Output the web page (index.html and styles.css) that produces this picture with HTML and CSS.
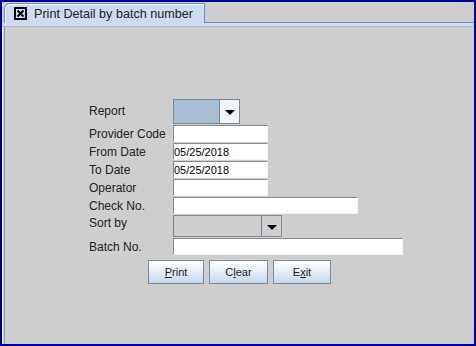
FILE: index.html
```html
<!DOCTYPE html>
<html>
<head>
<meta charset="utf-8">
<link rel="stylesheet" href="styles.css">
</head>
<body>
<div class="window">
  <div class="tabstrip">
    <div class="tab">
      <svg class="close" width="13" height="13" viewBox="0 0 13 13">
        <rect x="1" y="1" width="11" height="11" fill="none" stroke="#000" stroke-width="2"/>
        <path d="M3.5 3.5 L9.5 9.5 M9.5 3.5 L3.5 9.5" stroke="#000" stroke-width="2" fill="none"/>
      </svg>
      <span class="tab-title">Print Detail by batch number</span>
    </div>
    <div class="tab-rest"></div>
  </div>
  <div class="band"></div>
  <div class="panel">
    <div class="form">
      <div class="label label-report">Report</div>
      <div class="combo combo-report"><div class="combo-value sel"></div><div class="combo-btn light"><span class="arrow"></span></div></div>

      <div class="label">Provider Code</div>
      <div class="field w94"></div>

      <div class="label">From Date</div>
      <div class="field w94">05/25/2018</div>

      <div class="label">To Date</div>
      <div class="field w94">05/25/2018</div>

      <div class="label">Operator</div>
      <div class="field w94"></div>

      <div class="label">Check No.</div>
      <div class="field w184"></div>

      <div class="label label-sort">Sort by</div>
      <div class="combo combo-sort"><div class="combo-value"></div><div class="combo-btn"><span class="arrow"></span></div></div>

      <div class="label">Batch No.</div>
      <div class="field w229"></div>
    </div>
    <div class="buttons">
      <div class="btn b-print"><u>P</u>rint</div>
      <div class="btn b-clear">C<u>l</u>ear</div>
      <div class="btn b-exit">E<u>x</u>it</div>
    </div>
  </div>
</div>
</body>
</html>
```

FILE: styles.css
```css
* { box-sizing: border-box; }
html, body { margin: 0; padding: 0; }
body {
  width: 476px;
  height: 346px;
  overflow: hidden;
  font-family: "Liberation Sans", Arial, sans-serif;
}
.window {
  width: 476px;
  height: 346px;
  border: 2px solid #0000a0;
  background: #cecece;
  display: flex;
  flex-direction: column;
}
.tabstrip {
  display: flex;
  height: 21px;
  flex: none;
}
.tab {
  margin-left: 2px;
  margin-top: 1px;
  width: 201px;
  height: 20px;
  background: #cddcf4;
  border: 1px solid #6e8fc8;
  border-bottom: none;
  border-top-left-radius: 6px;
  box-shadow: inset 1px 1px 0 #eef3fc;
  display: flex;
  align-items: center;
  padding-left: 9px;
  gap: 7px;
}
.close { flex: none; display: block; }
.tab-title {
  font-size: 12.6px;
  color: #222;
  white-space: nowrap;
}
.tab-rest {
  flex: 1;
  border-bottom: 1px solid #6e8fc8;
}
.band {
  flex: none;
  height: 4px;
  background: #cddcf4;
  border-bottom: 1px solid #b2b8c2;
}
.panel {
  flex: 1;
  box-shadow: inset 1px 0 0 #eef2f8, inset 2px 0 0 #cddcf4, inset 3px 0 0 #7f9bc7;
  padding-top: 72px;
  padding-left: 87px;
}
.form {
  display: grid;
  grid-template-columns: 84px auto;
  grid-template-rows: 25px repeat(5, 17px) 22px 17px;
  row-gap: 1px;
  align-items: center;
}
.label {
  font-size: 12px;
  color: #222;
  white-space: nowrap;
  line-height: 14px;
}
.label-report { align-self: start; margin-top: 5px; }
.label-sort { align-self: start; margin-top: 1px; }
.field {
  height: 17px;
  background: #fff;
  border-top: 1px solid #8a8a8a;
  border-left: 1px solid #8a8a8a;
  border-right: 1px solid #f4f4f4;
  border-bottom: 1px solid #f4f4f4;
  font-size: 11px;
  line-height: 16px;
  color: #000;
  white-space: nowrap;
}
.w94 { width: 95px; }
.w184 { width: 185px; }
.w229 { width: 230px; }
.combo {
  display: flex;
  border: 1px solid #7a8a99;
}
.combo-report { width: 67px; height: 25px; }
.combo-sort { width: 109px; height: 22px; }
.combo-value { flex: 1; }
.combo-value.sel { background: #a9bed3; }
.combo-btn {
  flex: none;
  width: 20px;
  border-left: 1px solid #7a8a99;
  display: flex;
  align-items: center;
  justify-content: center;
}
.combo-btn.light { background: #f2f4f7; }
.arrow {
  width: 0;
  height: 0;
  border-left: 5px solid transparent;
  border-right: 5px solid transparent;
  border-top: 5px solid #000;
  margin-top: 2px;
}
.buttons {
  display: flex;
  gap: 5px;
  margin-top: 5px;
  margin-left: 59px;
}
.btn {
  height: 24px;
  border: 1px solid #7a8a99;
  background: linear-gradient(#ffffff, #e6eef8 45%, #c6d8ee);
  font-size: 11px;
  color: #222;
  display: flex;
  align-items: center;
  justify-content: center;
}
.b-print { width: 56px; }
.b-clear { width: 59px; }
.b-exit { width: 58px; }
```
